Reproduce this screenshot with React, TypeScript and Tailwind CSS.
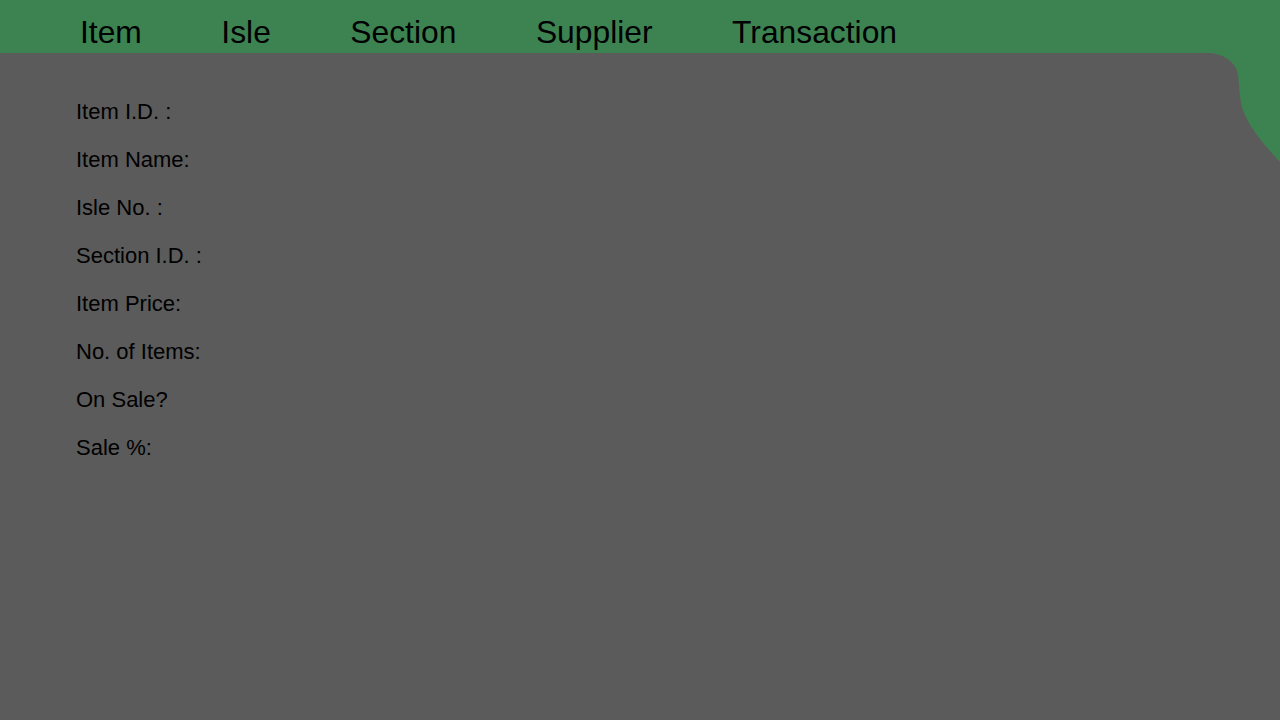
const NAV_ITEMS = ["Item", "Isle", "Section", "Supplier", "Transaction"];

const FIELDS = [
  "Item I.D. :",
  "Item Name:",
  "Isle No. :",
  "Section I.D. :",
  "Item Price:",
  "No. of Items:",
  "On Sale?",
  "Sale %:",
];

export default function App() {
  return (
    <div
      className="relative min-h-screen w-full overflow-hidden bg-[#5b5b5b] text-black"
      style={{ fontFamily: '"Liberation Sans", Arial, sans-serif' }}
    >
      {/* Top nav bar */}
      <nav className="flex h-[53px] gap-[79.5px] bg-[#3d8351] pl-[80px] pt-[16px]">
        {NAV_ITEMS.map((item) => (
          <span key={item} className="text-[31.8px] leading-[32px]">
            {item}
          </span>
        ))}
      </nav>

      {/* Corner decoration */}
      <svg
        className="absolute right-0 top-[53px]"
        width="80"
        height="110"
        viewBox="0 0 80 110"
      >
        <path
          d="M7 0 C22 0 36 8 38 22 C40 36 39 50 45 62 C52 78 66 94 80 109 V0 Z"
          fill="#3d8351"
        />
      </svg>

      {/* Item form */}
      <div className="mt-[35px] flex flex-col pl-[76px]">
        {FIELDS.map((label) => (
          <div key={label} className="h-[48px] text-[22px] leading-[48px]">
            {label}
          </div>
        ))}
      </div>
    </div>
  );
}
